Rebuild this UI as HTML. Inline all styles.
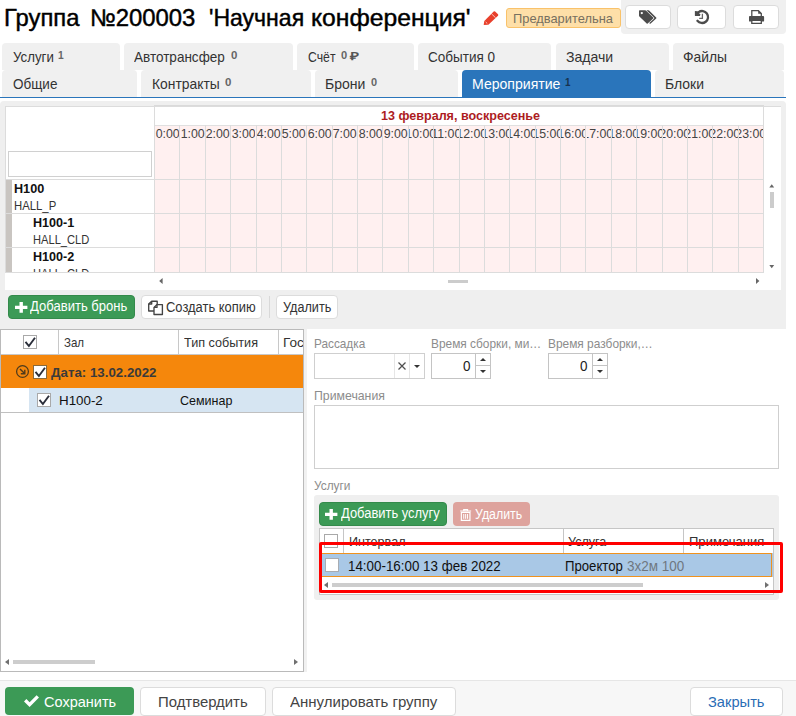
<!DOCTYPE html>
<html><head><meta charset="utf-8"><style>
*{box-sizing:border-box;margin:0;padding:0}
html,body{width:796px;height:716px;overflow:hidden;background:#fff}
body{font-family:"Liberation Sans",sans-serif;color:#333;position:relative}
.a{position:absolute}
.t{position:absolute;white-space:nowrap;line-height:1;transform-origin:0 0}
.tab{position:absolute;background:#f0f0f0;border-radius:4px 4px 0 0}
.btn{position:absolute;background:#fff;border:1px solid #dcdcdc;border-radius:4px}
.cb{position:absolute;width:14px;height:14px;background:#fff;border:1px solid #a9a9a9}
.sup{font-size:10.5px;font-weight:bold;color:#555}
svg{position:absolute;overflow:visible}
</style></head><body>
<div class="t" id="t0" style="left:3.90px;top:6px;font-size:24px;transform:scaleX(0.9911);color:#000;-webkit-text-stroke:0.45px #000">Группа</div>
<div class="t" id="t1" style="left:89.50px;top:6px;font-size:24px;transform:scaleX(0.9958);color:#000;-webkit-text-stroke:0.45px #000">№200003</div>
<div class="t" id="t2" style="left:208.60px;top:6px;font-size:24px;transform:scaleX(0.9597);color:#000;-webkit-text-stroke:0.45px #000">'Научная</div>
<div class="t" id="t3" style="left:311.20px;top:6px;font-size:24px;transform:scaleX(1.0286);color:#000;-webkit-text-stroke:0.45px #000">конференция'</div>
<svg style="left:0;top:0" width="520" height="40" viewBox="0 0 520 40"><path d="M483.7 25.1 L484.3 21 L493.7 11.5 Q494.4 10.9 495.1 11.5 L498 14.3 Q498.6 15 498 15.7 L488.4 24.7 Z" fill="#e8402c"/><path d="M491.5 13.8 L495.6 17.8" stroke="#fff" stroke-width="0.7"/><path d="M485.7 22 L487.3 23.6" stroke="#ffd9d0" stroke-width="0.9"/></svg>
<div class="a" style="left:506px;top:8px;width:115px;height:20px;background:#fedfa8;border:1px solid #f9c26a;border-radius:3px;overflow:hidden"></div>
<div class="a" style="left:506px;top:8px;width:114px;height:20px;overflow:hidden"><div class="t" id="t4" style="left:7.30px;top:4px;font-size:13.5px;transform:scaleX(0.9528);color:#777060">Предварительна</div></div>
<div class="a" style="left:621px;top:0;width:165px;height:34px;background:#f0f0f0;border-radius:0 0 4px 4px"></div>
<div class="btn" style="left:625px;top:5px;width:46px;height:24px"></div>
<div class="btn" style="left:677px;top:5px;width:49px;height:24px"></div>
<div class="btn" style="left:733px;top:5px;width:46px;height:24px"></div>
<svg style="left:0;top:0" width="796" height="40" viewBox="0 0 796 40"><g transform="translate(632,6)"><path d="M7 4.9 Q7 4.2 7.7 4.2 L13 4.2 Q13.5 4.2 13.9 4.6 L21.2 11.6 Q21.7 12.1 21.2 12.6 L15.7 17.5 Q15.2 18 14.7 17.5 L7.4 10.4 Q7 10 7 9.5 Z" fill="#4c4c4c"/><circle cx="9.8" cy="7.1" r="1.15" fill="#fff"/><path d="M14.4 4.2 L16.2 4.2 Q16.7 4.2 17.1 4.6 L24.2 11.6 Q24.7 12.1 24.2 12.6 L18.7 17.5 Q18.2 18 17.7 17.5 L17.2 17 L22 12.7 Q22.6 12.1 22 11.5 Z" fill="#4c4c4c"/></g><g transform="translate(686,6)"><path d="M12.6 6.1 A6 6 0 1 1 11.4 14.8" fill="none" stroke="#4c4c4c" stroke-width="2.3" stroke-linecap="round"/><path d="M8.9 4.9 L11.6 5.2 L14.1 8.2 L14.1 10 L8.9 10 Z" fill="#4c4c4c"/><path d="M16.4 7.7 V12.3 H13.2" fill="none" stroke="#666" stroke-width="1.3"/></g><g transform="translate(740,6)"><path d="M11.8 10.5 V4.6 H18.4 L21.3 7.5 V10.5" fill="#fff" stroke="#4c4c4c" stroke-width="1.3"/><path d="M18.2 4.2 V7.8 H21.7 Z" fill="#4c4c4c"/><rect x="9" y="10" width="15.1" height="5.6" rx="0.9" fill="#4c4c4c"/><path d="M11.8 15 V17.3 H21.3 V15" fill="#fff" stroke="#4c4c4c" stroke-width="1.3"/></g></svg>
<div class="tab" style="left:2px;top:43px;width:118px;height:27px"></div>
<div class="tab" style="left:124px;top:43px;width:169px;height:27px"></div>
<div class="tab" style="left:297px;top:43px;width:117px;height:27px"></div>
<div class="tab" style="left:418px;top:43px;width:133px;height:27px"></div>
<div class="tab" style="left:556px;top:43px;width:113px;height:27px"></div>
<div class="tab" style="left:673px;top:43px;width:111px;height:27px"></div>
<div class="tab" style="left:2px;top:70px;width:135px;height:27px"></div>
<div class="tab" style="left:141px;top:70px;width:170px;height:27px"></div>
<div class="tab" style="left:315px;top:70px;width:143px;height:27px"></div>
<div class="tab" style="left:462px;top:70px;width:189px;height:27px;background:#2a75bb"></div>
<div class="tab" style="left:655px;top:70px;width:129px;height:27px"></div>
<div class="a" style="left:0;top:97px;width:786px;height:1px;background:#2a75bb"></div>
<div class="t" id="t5" style="left:12.60px;top:50px;font-size:14.5px;transform:scaleX(0.9172);">Услуги</div>
<div class="t" id="t6" style="left:57.80px;top:50px;font-size:11.5px;transform:scaleX(0.8898);font-weight:bold;color:#666">1</div>
<div class="t" id="t7" style="left:134.20px;top:50px;font-size:14.5px;transform:scaleX(0.9325);">Автотрансфер</div>
<div class="t" id="t8" style="left:230.60px;top:50px;font-size:11.5px;transform:scaleX(0.9990);font-weight:bold;color:#666">0</div>
<div class="t" id="t9" style="left:307.50px;top:50px;font-size:14.5px;transform:scaleX(0.8441);">Счёт</div>
<div class="t" id="t10" style="left:340.80px;top:50px;font-size:11.5px;transform:scaleX(0.9678);font-weight:bold;color:#666">0</div>
<div class="t" id="t11" style="left:350.40px;top:51px;font-size:11px;transform:scaleX(1.4000);font-weight:bold;color:#555">₽</div>
<div class="t" id="t12" style="left:428.40px;top:50px;font-size:14.5px;transform:scaleX(0.9326);">События 0</div>
<div class="t" id="t13" style="left:565.80px;top:50px;font-size:14.5px;transform:scaleX(0.9694);">Задачи</div>
<div class="t" id="t14" style="left:683.20px;top:50px;font-size:14.5px;transform:scaleX(0.9549);">Файлы</div>
<div class="t" id="t15" style="left:12.60px;top:77px;font-size:14.5px;transform:scaleX(0.9311);">Общие</div>
<div class="t" id="t16" style="left:151.80px;top:77px;font-size:14.5px;transform:scaleX(0.9568);">Контракты</div>
<div class="t" id="t17" style="left:224.60px;top:77px;font-size:11.5px;transform:scaleX(0.9990);font-weight:bold;color:#666">0</div>
<div class="t" id="t18" style="left:324.90px;top:77px;font-size:14.5px;transform:scaleX(0.9673);">Брони</div>
<div class="t" id="t19" style="left:370.90px;top:77px;font-size:11.5px;transform:scaleX(0.9522);font-weight:bold;color:#666">0</div>
<div class="t" id="t20" style="left:472.40px;top:77px;font-size:14.5px;transform:scaleX(0.9703);color:#fff">Мероприятие</div>
<div class="t" id="t21" style="left:565.00px;top:77px;font-size:11.5px;transform:scaleX(0.8585);font-weight:bold;color:#17324f">1</div>
<div class="t" id="t22" style="left:665.00px;top:77px;font-size:14.5px;transform:scaleX(0.9633);">Блоки</div>
<div class="a" style="left:0;top:101px;width:786px;height:228px;background:#efefef;border-radius:4px 4px 0 0"></div>
<div class="a" style="left:5px;top:106px;width:776px;height:184px;background:#fff;border-top:1px solid #dcdcdc"></div>
<div class="a" style="left:5px;top:106px;width:1px;height:167px;background:#dcdcdc"></div>
<div class="a" style="left:154px;top:126px;width:610px;height:146px;background:#fff0f0"></div>
<div class="a" style="left:154px;top:125px;width:610px;height:1px;background:#e0e0e0"></div>
<div class="a" style="left:154px;top:105px;width:610px;height:1px;background:#dadada"></div>
<div class="a" style="left:6px;top:180px;width:6px;height:92px;background:#c9c5c1"></div>
<div class="a" style="left:154px;top:106px;width:1px;height:166px;background:#dcdcdc"></div>
<div class="a" style="left:179px;top:125px;width:1px;height:147px;background:#dcdcdc"></div>
<div class="a" style="left:205px;top:125px;width:1px;height:147px;background:#dcdcdc"></div>
<div class="a" style="left:230px;top:125px;width:1px;height:147px;background:#dcdcdc"></div>
<div class="a" style="left:256px;top:125px;width:1px;height:147px;background:#dcdcdc"></div>
<div class="a" style="left:281px;top:125px;width:1px;height:147px;background:#dcdcdc"></div>
<div class="a" style="left:306px;top:125px;width:1px;height:147px;background:#dcdcdc"></div>
<div class="a" style="left:332px;top:125px;width:1px;height:147px;background:#dcdcdc"></div>
<div class="a" style="left:357px;top:125px;width:1px;height:147px;background:#dcdcdc"></div>
<div class="a" style="left:382px;top:125px;width:1px;height:147px;background:#dcdcdc"></div>
<div class="a" style="left:408px;top:125px;width:1px;height:147px;background:#dcdcdc"></div>
<div class="a" style="left:433px;top:125px;width:1px;height:147px;background:#dcdcdc"></div>
<div class="a" style="left:459px;top:125px;width:1px;height:147px;background:#dcdcdc"></div>
<div class="a" style="left:484px;top:125px;width:1px;height:147px;background:#dcdcdc"></div>
<div class="a" style="left:509px;top:125px;width:1px;height:147px;background:#dcdcdc"></div>
<div class="a" style="left:535px;top:125px;width:1px;height:147px;background:#dcdcdc"></div>
<div class="a" style="left:560px;top:125px;width:1px;height:147px;background:#dcdcdc"></div>
<div class="a" style="left:585px;top:125px;width:1px;height:147px;background:#dcdcdc"></div>
<div class="a" style="left:611px;top:125px;width:1px;height:147px;background:#dcdcdc"></div>
<div class="a" style="left:636px;top:125px;width:1px;height:147px;background:#dcdcdc"></div>
<div class="a" style="left:662px;top:125px;width:1px;height:147px;background:#dcdcdc"></div>
<div class="a" style="left:687px;top:125px;width:1px;height:147px;background:#dcdcdc"></div>
<div class="a" style="left:712px;top:125px;width:1px;height:147px;background:#dcdcdc"></div>
<div class="a" style="left:738px;top:125px;width:1px;height:147px;background:#dcdcdc"></div>
<div class="a" style="left:763px;top:106px;width:1px;height:166px;background:#dcdcdc"></div>
<div class="a" style="left:6px;top:179px;width:758px;height:1px;background:#dcdcdc"></div>
<div class="a" style="left:6px;top:213px;width:758px;height:1px;background:#dcdcdc"></div>
<div class="a" style="left:6px;top:247px;width:758px;height:1px;background:#dcdcdc"></div>
<div class="a" style="left:6px;top:272px;width:758px;height:1px;background:#dcdcdc"></div>
<div class="a" style="left:155.0px;top:126px;width:24.4px;height:15px;overflow:hidden;display:flex;justify-content:center;font-size:13px;line-height:15px;white-space:nowrap;color:#444"><span style="display:inline-block;flex:none;transform:translateX(0px) scaleX(0.95);transform-origin:50% 50%">0:00</span></div>
<div class="a" style="left:180.4px;top:126px;width:24.4px;height:15px;overflow:hidden;display:flex;justify-content:center;font-size:13px;line-height:15px;white-space:nowrap;color:#444"><span style="display:inline-block;flex:none;transform:translateX(0px) scaleX(0.95);transform-origin:50% 50%">1:00</span></div>
<div class="a" style="left:205.8px;top:126px;width:24.4px;height:15px;overflow:hidden;display:flex;justify-content:center;font-size:13px;line-height:15px;white-space:nowrap;color:#444"><span style="display:inline-block;flex:none;transform:translateX(0px) scaleX(0.95);transform-origin:50% 50%">2:00</span></div>
<div class="a" style="left:231.1px;top:126px;width:24.4px;height:15px;overflow:hidden;display:flex;justify-content:center;font-size:13px;line-height:15px;white-space:nowrap;color:#444"><span style="display:inline-block;flex:none;transform:translateX(0px) scaleX(0.95);transform-origin:50% 50%">3:00</span></div>
<div class="a" style="left:256.5px;top:126px;width:24.4px;height:15px;overflow:hidden;display:flex;justify-content:center;font-size:13px;line-height:15px;white-space:nowrap;color:#444"><span style="display:inline-block;flex:none;transform:translateX(0px) scaleX(0.95);transform-origin:50% 50%">4:00</span></div>
<div class="a" style="left:281.9px;top:126px;width:24.4px;height:15px;overflow:hidden;display:flex;justify-content:center;font-size:13px;line-height:15px;white-space:nowrap;color:#444"><span style="display:inline-block;flex:none;transform:translateX(0px) scaleX(0.95);transform-origin:50% 50%">5:00</span></div>
<div class="a" style="left:307.3px;top:126px;width:24.4px;height:15px;overflow:hidden;display:flex;justify-content:center;font-size:13px;line-height:15px;white-space:nowrap;color:#444"><span style="display:inline-block;flex:none;transform:translateX(0px) scaleX(0.95);transform-origin:50% 50%">6:00</span></div>
<div class="a" style="left:332.7px;top:126px;width:24.4px;height:15px;overflow:hidden;display:flex;justify-content:center;font-size:13px;line-height:15px;white-space:nowrap;color:#444"><span style="display:inline-block;flex:none;transform:translateX(0px) scaleX(0.95);transform-origin:50% 50%">7:00</span></div>
<div class="a" style="left:358.0px;top:126px;width:24.4px;height:15px;overflow:hidden;display:flex;justify-content:center;font-size:13px;line-height:15px;white-space:nowrap;color:#444"><span style="display:inline-block;flex:none;transform:translateX(0px) scaleX(0.95);transform-origin:50% 50%">8:00</span></div>
<div class="a" style="left:383.4px;top:126px;width:24.4px;height:15px;overflow:hidden;display:flex;justify-content:center;font-size:13px;line-height:15px;white-space:nowrap;color:#444"><span style="display:inline-block;flex:none;transform:translateX(0px) scaleX(0.95);transform-origin:50% 50%">9:00</span></div>
<div class="a" style="left:408.8px;top:126px;width:24.4px;height:15px;overflow:hidden;display:flex;justify-content:center;font-size:13px;line-height:15px;white-space:nowrap;color:#444"><span style="display:inline-block;flex:none;transform:translateX(-0.5px) scaleX(0.95);transform-origin:50% 50%">10:00</span></div>
<div class="a" style="left:434.2px;top:126px;width:24.4px;height:15px;overflow:hidden;display:flex;justify-content:center;font-size:13px;line-height:15px;white-space:nowrap;color:#444"><span style="display:inline-block;flex:none;transform:translateX(-0.5px) scaleX(0.95);transform-origin:50% 50%">11:00</span></div>
<div class="a" style="left:459.6px;top:126px;width:24.4px;height:15px;overflow:hidden;display:flex;justify-content:center;font-size:13px;line-height:15px;white-space:nowrap;color:#444"><span style="display:inline-block;flex:none;transform:translateX(-0.5px) scaleX(0.95);transform-origin:50% 50%">12:00</span></div>
<div class="a" style="left:484.9px;top:126px;width:24.4px;height:15px;overflow:hidden;display:flex;justify-content:center;font-size:13px;line-height:15px;white-space:nowrap;color:#444"><span style="display:inline-block;flex:none;transform:translateX(-0.5px) scaleX(0.95);transform-origin:50% 50%">13:00</span></div>
<div class="a" style="left:510.3px;top:126px;width:24.4px;height:15px;overflow:hidden;display:flex;justify-content:center;font-size:13px;line-height:15px;white-space:nowrap;color:#444"><span style="display:inline-block;flex:none;transform:translateX(-0.5px) scaleX(0.95);transform-origin:50% 50%">14:00</span></div>
<div class="a" style="left:535.7px;top:126px;width:24.4px;height:15px;overflow:hidden;display:flex;justify-content:center;font-size:13px;line-height:15px;white-space:nowrap;color:#444"><span style="display:inline-block;flex:none;transform:translateX(-0.5px) scaleX(0.95);transform-origin:50% 50%">15:00</span></div>
<div class="a" style="left:561.1px;top:126px;width:24.4px;height:15px;overflow:hidden;display:flex;justify-content:center;font-size:13px;line-height:15px;white-space:nowrap;color:#444"><span style="display:inline-block;flex:none;transform:translateX(-0.5px) scaleX(0.95);transform-origin:50% 50%">16:00</span></div>
<div class="a" style="left:586.5px;top:126px;width:24.4px;height:15px;overflow:hidden;display:flex;justify-content:center;font-size:13px;line-height:15px;white-space:nowrap;color:#444"><span style="display:inline-block;flex:none;transform:translateX(-0.5px) scaleX(0.95);transform-origin:50% 50%">17:00</span></div>
<div class="a" style="left:611.8px;top:126px;width:24.4px;height:15px;overflow:hidden;display:flex;justify-content:center;font-size:13px;line-height:15px;white-space:nowrap;color:#444"><span style="display:inline-block;flex:none;transform:translateX(-0.5px) scaleX(0.95);transform-origin:50% 50%">18:00</span></div>
<div class="a" style="left:637.2px;top:126px;width:24.4px;height:15px;overflow:hidden;display:flex;justify-content:center;font-size:13px;line-height:15px;white-space:nowrap;color:#444"><span style="display:inline-block;flex:none;transform:translateX(-0.5px) scaleX(0.95);transform-origin:50% 50%">19:00</span></div>
<div class="a" style="left:662.6px;top:126px;width:24.4px;height:15px;overflow:hidden;display:flex;justify-content:center;font-size:13px;line-height:15px;white-space:nowrap;color:#444"><span style="display:inline-block;flex:none;transform:translateX(-0.5px) scaleX(0.95);transform-origin:50% 50%">20:00</span></div>
<div class="a" style="left:688.0px;top:126px;width:24.4px;height:15px;overflow:hidden;display:flex;justify-content:center;font-size:13px;line-height:15px;white-space:nowrap;color:#444"><span style="display:inline-block;flex:none;transform:translateX(-0.5px) scaleX(0.95);transform-origin:50% 50%">21:00</span></div>
<div class="a" style="left:713.4px;top:126px;width:24.4px;height:15px;overflow:hidden;display:flex;justify-content:center;font-size:13px;line-height:15px;white-space:nowrap;color:#444"><span style="display:inline-block;flex:none;transform:translateX(-0.5px) scaleX(0.95);transform-origin:50% 50%">22:00</span></div>
<div class="a" style="left:738.7px;top:126px;width:24.4px;height:15px;overflow:hidden;display:flex;justify-content:center;font-size:13px;line-height:15px;white-space:nowrap;color:#444"><span style="display:inline-block;flex:none;transform:translateX(-0.5px) scaleX(0.95);transform-origin:50% 50%">23:00</span></div>
<div class="t" id="t23" style="left:380.50px;top:109px;font-size:13.5px;transform:scaleX(0.9302);font-weight:bold;color:#ad1c1f">13 февраля, воскресенье</div>
<div class="a" style="left:8px;top:151px;width:144px;height:26px;background:#fff;border:1px solid #d0d0d0"></div>
<div class="t" id="t24" style="left:14.30px;top:183px;font-size:12px;transform:scaleX(1.0527);font-weight:bold;color:#111">H100</div>
<div class="t" id="t25" style="left:14.30px;top:200px;font-size:12px;transform:scaleX(0.9440);color:#333">HALL_P</div>
<div class="t" id="t26" style="left:32.70px;top:217px;font-size:12px;transform:scaleX(1.0493);font-weight:bold;color:#111">H100-1</div>
<div class="t" id="t27" style="left:32.70px;top:234px;font-size:12px;transform:scaleX(0.9275);color:#333">HALL_CLD</div>
<div class="t" id="t28" style="left:32.70px;top:251px;font-size:12px;transform:scaleX(1.0493);font-weight:bold;color:#111">H100-2</div>
<div class="a" style="left:6px;top:262px;width:148px;height:10px;overflow:hidden"><div class="t" id="t29" style="left:26.70px;top:6px;font-size:12px;transform:scaleX(0.9275);color:#333">HALL_CLD</div></div>
<svg style="left:159px;top:278px" width="4" height="6" viewBox="0 0 4 6"><path d="M3.6 0 L3.6 6 L0.2 3 Z" fill="#666"/></svg>
<svg style="left:756px;top:278px" width="4" height="6" viewBox="0 0 4 6"><path d="M0 0 L0 6 L3.4 3 Z" fill="#666"/></svg>
<div class="a" style="left:448px;top:280px;width:20px;height:3px;background:#ccc"></div>
<svg style="left:769px;top:184px" width="6" height="4" viewBox="0 0 6 4"><path d="M0.3 3.4 L5.2 3.4 L2.75 0.2 Z" fill="#666"/></svg>
<svg style="left:769px;top:265px" width="6" height="4" viewBox="0 0 6 4"><path d="M0.3 0 L5.2 0 L2.75 3.2 Z" fill="#666"/></svg>
<div class="a" style="left:770px;top:192px;width:4px;height:16px;background:#ccc"></div>
<div class="a" style="left:8px;top:295px;width:127px;height:24px;background:#3c9a56;border:1px solid #348a4b;border-radius:4px"></div>
<svg style="left:14.7px;top:302px" width="12.4" height="10.8" viewBox="0 0 12.4 10.8"><path d="M4.5 0 H7.9 V3.7 H12.4 V7.1 H7.9 V10.8 H4.5 V7.1 H0 V3.7 H4.5 Z" fill="#fff"/></svg>
<div class="t" id="t30" style="left:30.20px;top:299px;font-size:14px;transform:scaleX(0.9330);color:#fff">Добавить бронь</div>
<div class="btn" style="left:141px;top:295px;width:121px;height:24px"></div>
<svg style="left:0;top:290px" width="300" height="40" viewBox="0 290 300 40"><g fill="#fff" stroke="#444" stroke-width="1.35" stroke-linejoin="round"><path d="M148.7 304 L151.7 301.2 H157.2 V311 H148.7 Z"/><path d="M151.7 301.2 V304 H148.7" fill="none"/><path d="M154 307.4 L157 304.6 H162.4 V314.5 H154 Z"/><path d="M157 304.6 V307.4 H154" fill="none"/></g></svg>
<div class="t" id="t31" style="left:165.80px;top:300px;font-size:14px;transform:scaleX(0.9240);">Создать копию</div>
<div class="a" style="left:269px;top:296px;width:1px;height:22px;background:#d8d8d8"></div>
<div class="btn" style="left:276px;top:295px;width:62px;height:24px"></div>
<div class="t" id="t32" style="left:282.70px;top:300px;font-size:14px;transform:scaleX(0.9036);">Удалить</div>
<div class="a" style="left:0;top:329px;width:304px;height:343px;background:#fff;border:1px solid #bababa"></div>
<div class="a" style="left:1px;top:354px;width:302px;height:1px;background:#c8c8c8"></div>
<div class="a" style="left:58px;top:330px;width:1px;height:24px;background:#c8c8c8"></div>
<div class="a" style="left:178px;top:330px;width:1px;height:24px;background:#c8c8c8"></div>
<div class="a" style="left:278px;top:330px;width:1px;height:24px;background:#c8c8c8"></div>
<div class="cb" style="left:23px;top:335px"><svg style="left:0;top:0" width="12" height="12" viewBox="0 0 12 12"><path d="M1.5 5.8 L4.9 10 L11 1.8" fill="none" stroke="#2a2e3a" stroke-width="1.9"/></svg></div>
<div class="t" id="t33" style="left:63.90px;top:336px;font-size:13px;transform:scaleX(0.8866);">Зал</div>
<div class="t" id="t34" style="left:183.60px;top:336px;font-size:13px;transform:scaleX(0.9709);">Тип события</div>
<div class="a" style="left:279px;top:330px;width:24px;height:24px;overflow:hidden"><div class="t" id="t35" style="left:4.20px;top:6px;font-size:13px;transform:scaleX(1.0449);">Гос</div></div>
<div class="a" style="left:1px;top:355px;width:302px;height:33px;background:#f5870c"></div>
<svg style="left:16px;top:365px" width="13" height="13" viewBox="0 0 13 13"><circle cx="6.5" cy="6.5" r="5.9" fill="none" stroke="#4d3a1c" stroke-width="1.25"/><path d="M4 4 L8.6 8.6 M8.8 4.8 V8.8 H4.8" fill="none" stroke="#4d3a1c" stroke-width="1.4"/></svg>
<div class="cb" style="left:33px;top:365px;border-color:#8a6a3a"><svg style="left:0;top:0" width="12" height="12" viewBox="0 0 12 12"><path d="M1.5 5.8 L4.9 10 L11 1.8" fill="none" stroke="#2a2e3a" stroke-width="1.9"/></svg></div>
<div class="t" id="t36" style="left:51.30px;top:366px;font-size:13px;transform:scaleX(1.0233);font-weight:bold;color:#3a3a3a">Дата: 13.02.2022</div>
<div class="a" style="left:29px;top:388px;width:274px;height:24px;background:#d6e5f2"></div>
<div class="a" style="left:1px;top:412px;width:302px;height:1px;background:#c0c0c0"></div>
<div class="cb" style="left:37px;top:393px"><svg style="left:0;top:0" width="12" height="12" viewBox="0 0 12 12"><path d="M1.5 5.8 L4.9 10 L11 1.8" fill="none" stroke="#2a2e3a" stroke-width="1.9"/></svg></div>
<div class="t" id="t37" style="left:59.30px;top:394px;font-size:13px;transform:scaleX(1.0272);color:#111">H100-2</div>
<div class="t" id="t38" style="left:179.60px;top:394px;font-size:13px;transform:scaleX(0.9620);color:#111">Семинар</div>
<svg style="left:5px;top:659px" width="4" height="6" viewBox="0 0 4 6"><path d="M4 0 L4 6 L0 3 Z" fill="#707070"/></svg>
<svg style="left:294px;top:659px" width="4" height="6" viewBox="0 0 4 6"><path d="M0 0 L0 6 L4 3 Z" fill="#707070"/></svg>
<div class="a" style="left:13px;top:660px;width:82px;height:4px;background:#cdcdcd"></div>
<div class="a" style="left:304px;top:329px;width:3px;height:343px;background:#f1f1f1"></div>
<div class="t" id="t39" style="left:313.80px;top:337px;font-size:13px;transform:scaleX(0.9062);color:#8c8c8c">Рассадка</div>
<div class="t" id="t40" style="left:430.60px;top:337px;font-size:13px;transform:scaleX(0.9145);color:#8c8c8c">Время сборки, ми…</div>
<div class="t" id="t41" style="left:547.70px;top:337px;font-size:13px;transform:scaleX(0.9158);color:#8c8c8c">Время разборки,…</div>
<div class="a" style="left:314px;top:353px;width:111px;height:26px;background:#fff;border:1px solid #cfcfcf"></div>
<div class="a" style="left:394px;top:354px;width:1px;height:24px;background:#e6e6e6"></div>
<div class="a" style="left:409px;top:354px;width:1px;height:24px;background:#e6e6e6"></div>
<svg style="left:398px;top:362px" width="8" height="8" viewBox="0 0 8 8"><path d="M0.5 0.5 L7.5 7.5 M7.5 0.5 L0.5 7.5" stroke="#505050" stroke-width="1.25"/></svg>
<svg style="left:414px;top:365px" width="6" height="3" viewBox="0 0 6 3"><path d="M0 0 L6 0 L3 3 Z" fill="#333"/></svg>
<div class="a" style="left:431px;top:353px;width:60px;height:26px;background:#fff;border:1px solid #c4c4c4"></div>
<div class="a" style="left:475px;top:354px;width:1px;height:24px;background:#c4c4c4"></div>
<div class="a" style="left:475px;top:365px;width:15px;height:1px;background:#c4c4c4"></div>
<svg style="left:480px;top:358px" width="6" height="3" viewBox="0 0 6 3"><path d="M0 3 L6 3 L3 0 Z" fill="#333"/></svg>
<svg style="left:480px;top:370px" width="6" height="3" viewBox="0 0 6 3"><path d="M0 0 L6 0 L3 3 Z" fill="#333"/></svg>
<div class="t" id="t42" style="left:463.40px;top:359px;font-size:14.5px;transform:scaleX(0.9284);color:#222">0</div>
<div class="a" style="left:548px;top:353px;width:60px;height:26px;background:#fff;border:1px solid #c4c4c4"></div>
<div class="a" style="left:592px;top:354px;width:1px;height:24px;background:#c4c4c4"></div>
<div class="a" style="left:592px;top:365px;width:15px;height:1px;background:#c4c4c4"></div>
<svg style="left:597px;top:358px" width="6" height="3" viewBox="0 0 6 3"><path d="M0 3 L6 3 L3 0 Z" fill="#333"/></svg>
<svg style="left:597px;top:370px" width="6" height="3" viewBox="0 0 6 3"><path d="M0 0 L6 0 L3 3 Z" fill="#333"/></svg>
<div class="t" id="t43" style="left:580.40px;top:359px;font-size:14.5px;transform:scaleX(0.9284);color:#222">0</div>
<div class="t" id="t44" style="left:313.80px;top:389px;font-size:13px;transform:scaleX(0.9445);color:#8c8c8c">Примечания</div>
<div class="a" style="left:314px;top:405px;width:465px;height:64px;background:#fff;border:1px solid #cfcfcf"></div>
<div class="t" id="t45" style="left:313.80px;top:479px;font-size:13px;transform:scaleX(0.9129);color:#8c8c8c">Услуги</div>
<div class="a" style="left:314px;top:495px;width:465px;height:105px;background:#efefef;border-radius:3px"></div>
<div class="a" style="left:319px;top:502px;width:128px;height:24px;background:#3c9a56;border:1px solid #348a4b;border-radius:4px"></div>
<svg style="left:325.4px;top:509px" width="12.4" height="10.8" viewBox="0 0 12.4 10.8"><path d="M4.5 0 H7.9 V3.7 H12.4 V7.1 H7.9 V10.8 H4.5 V7.1 H0 V3.7 H4.5 Z" fill="#fff"/></svg>
<div class="t" id="t46" style="left:341.00px;top:506px;font-size:14px;transform:scaleX(0.9234);color:#fff">Добавить услугу</div>
<div class="a" style="left:453px;top:502px;width:77px;height:24px;background:#dea39d;border-radius:4px"></div>
<svg style="left:460px;top:509px" width="11.3" height="12" viewBox="0 0 11 12"><path d="M0 2 H11 M3.6 2 V0.6 H7.4 V2" fill="none" stroke="#fff" stroke-width="1.2"/><path d="M1.2 3.4 H9.8 V11.4 H1.2 Z" fill="none" stroke="#fff" stroke-width="1.2"/><path d="M3.6 5 V9.8 M5.5 5 V9.8 M7.4 5 V9.8" stroke="#fff" stroke-width="1"/></svg>
<div class="t" id="t47" style="left:475.20px;top:507px;font-size:14px;transform:scaleX(0.8830);color:#fff">Удалить</div>
<div class="a" style="left:319px;top:528px;width:455px;height:67px;background:#fff;border:1px solid #c6c6c6"></div>
<div class="a" style="left:343px;top:529px;width:1px;height:25px;background:#c6c6c6"></div>
<div class="a" style="left:563px;top:529px;width:1px;height:25px;background:#c6c6c6"></div>
<div class="a" style="left:683px;top:529px;width:1px;height:25px;background:#c6c6c6"></div>
<div class="cb" style="left:324px;top:534px"></div>
<div class="t" id="t48" style="left:348.50px;top:535px;font-size:13px;transform:scaleX(0.9679);">Интервал</div>
<div class="t" id="t49" style="left:568.00px;top:535px;font-size:13px;transform:scaleX(0.9654);">Услуга</div>
<div class="t" id="t50" style="left:688.50px;top:535px;font-size:13px;transform:scaleX(1.0032);">Примечания</div>
<div class="a" style="left:320px;top:553px;width:453px;height:24px;background:#a9c8e6"></div>
<div class="a" style="left:320px;top:553px;width:452px;height:24px;border:1px solid #f0921e"></div>
<div class="cb" style="left:325px;top:558px;border-color:#a8acb2"></div>
<div class="t" id="t51" style="left:348.10px;top:559px;font-size:14px;transform:scaleX(0.9552);color:#111">14:00-16:00 13 фев 2022</div>
<div class="t" id="t52" style="left:565.00px;top:559px;font-size:14px;transform:scaleX(0.9410);color:#111">Проектор</div>
<div class="t" id="t53" style="left:626.70px;top:559px;font-size:14px;transform:scaleX(0.9638);color:#6f7780">3х2м 100</div>
<svg style="left:324px;top:582px" width="4" height="6" viewBox="0 0 4 6"><path d="M4 0 L4 6 L0 3 Z" fill="#707070"/></svg>
<svg style="left:765px;top:582px" width="4" height="6" viewBox="0 0 4 6"><path d="M0 0 L0 6 L4 3 Z" fill="#707070"/></svg>
<div class="a" style="left:332px;top:583px;width:311px;height:4px;background:#cdcdcd"></div>
<div class="a" style="left:319px;top:542px;width:464px;height:51px;border:3px solid #ff0000;border-radius:2px"></div>
<div class="a" style="left:0;top:680px;width:796px;height:36px;background:#f7f7f7;border-top:1px solid #e6e6e6"></div>
<div class="a" style="left:5px;top:687px;width:129px;height:28px;background:#3c9a56;border-radius:4px"></div>
<svg style="left:24px;top:695px" width="15" height="12" viewBox="0 0 15 12"><path d="M0 6.4 L2.4 4 L5.6 7.2 L12.6 0.2 L15 2.6 L5.6 12 Z" fill="#fff"/></svg>
<div class="t" id="t54" style="left:44.00px;top:695px;font-size:14.5px;transform:scaleX(1.0019);color:#fff">Сохранить</div>
<div class="btn" style="left:140px;top:687px;width:126px;height:29px"></div>
<div class="t" id="t55" style="left:158.20px;top:695px;font-size:14.5px;transform:scaleX(1.0266);color:#444">Подтвердить</div>
<div class="btn" style="left:272px;top:687px;width:184px;height:29px"></div>
<div class="t" id="t56" style="left:289.60px;top:695px;font-size:14.5px;transform:scaleX(1.0364);color:#444">Аннулировать группу</div>
<div class="btn" style="left:690px;top:687px;width:93px;height:29px"></div>
<div class="t" id="t57" style="left:708.30px;top:695px;font-size:14.5px;transform:scaleX(1.0115);color:#2a6db5">Закрыть</div>
</body></html>
